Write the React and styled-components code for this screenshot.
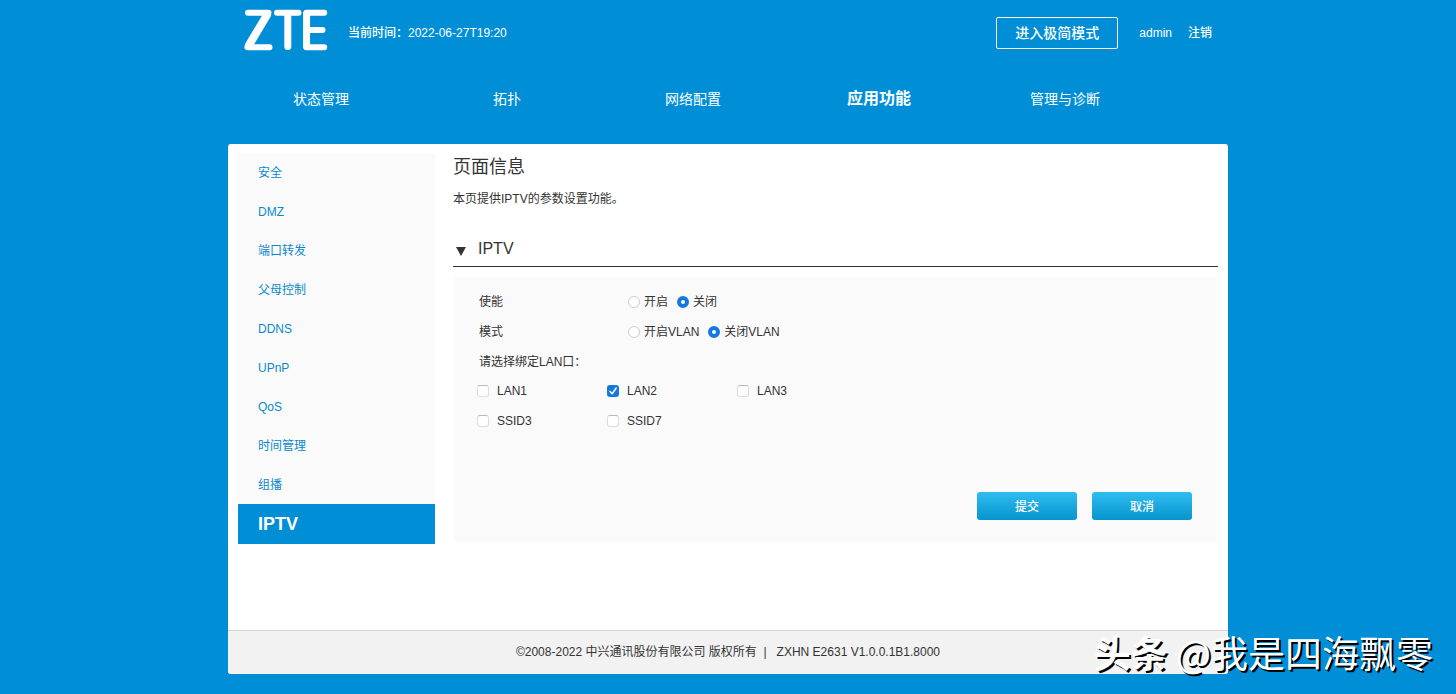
import { useState } from "react";
import styled, { createGlobalStyle, css } from "styled-components";

const GlobalStyle = createGlobalStyle`
  * {
    box-sizing: border-box;
  }

  body {
    margin: 0;
    background-color: #008fd7;
    color: #333;
    font-family: "Liberation Sans", "Noto Sans CJK SC", sans-serif;
    font-size: 12px;
    line-height: 18px;
  }

  a {
    color: inherit;
    text-decoration: none;
  }
`;

const Page = styled.div`
  position: relative;
  display: flex;
  flex-direction: column;
  min-height: 100vh;
  padding-bottom: 20px;
`;

const Container = styled.div`
  width: 100%;
  max-width: 1000px;
  margin: 0 auto;
`;

const TopBar = styled.header`
  display: flex;
  align-items: center;
  height: 66px;
  padding: 0 16px;
  color: white;
  font-weight: 500;
`;

const Logo = styled.svg`
  width: 84px;
  height: 42px;
  margin-bottom: 6px;
  fill: none;
  stroke: white;
  stroke-linecap: round;
  stroke-linejoin: round;
`;

const CurrentTime = styled.span`
  margin-left: 20px;
`;

const Account = styled.div`
  display: flex;
  align-items: center;
  gap: 16px;
  margin-left: auto;
`;

const ModeButton = styled.button`
  width: 122px;
  height: 32px;
  margin-right: 5px;
  padding: 0;
  border: 1px solid white;
  border-radius: 2px;
  background: transparent;
  color: white;
  font: inherit;
  font-size: 14px;
  cursor: pointer;
`;

const Nav = styled.nav`
  display: flex;
  align-items: center;
  height: 66px;
  margin-bottom: 12px;
  padding-right: 70px;
`;

const NavLink = styled.a`
  flex: 1;
  color: white;
  font-size: ${(props) => (props.$active ? "16px" : "14px")};
  font-weight: ${(props) => (props.$active ? "bold" : "normal")};
  text-align: center;
`;

const Card = styled(Container)`
  display: flex;
  flex: 1;
  flex-direction: column;
  overflow: hidden;
  border-radius: 3px;
  background-color: white;
`;

const Body = styled.div`
  display: flex;
  flex: 1;
  gap: 18px;
  padding: 9px 10px 30px;
`;

const Sidebar = styled.nav`
  flex: 0 0 197px;
  align-self: flex-start;
  background-color: #fafafa;
`;

const SideLink = styled.a`
  display: block;
  padding: 2px 0 0 20px;
  color: #0a8acb;
  line-height: 37px;

  ${(props) =>
    props.$active &&
    css`
      padding-top: 0;
      background-color: #008fd7;
      color: white;
      font-size: 18px;
      font-weight: bold;
      line-height: 40px;
    `}
`;

const Content = styled.main`
  flex: 1;
  min-width: 0;
  padding-top: 1px;
`;

const Title = styled.h1`
  margin: 0;
  font-size: 18px;
  font-weight: normal;
  line-height: 27px;
`;

const Description = styled.p`
  margin: 9px 0 26px;
`;

const SectionTitle = styled.h2`
  display: flex;
  align-items: center;
  gap: 12px;
  margin: 0 0 10px;
  padding: 0 3px 2px;
  border-bottom: 1px solid #333;
  font-size: 16px;
  font-weight: normal;
  line-height: 30px;
`;

const Triangle = styled.span`
  margin-top: 4px;
  border-top: 9px solid #333;
  border-right: 5px solid transparent;
  border-left: 5px solid transparent;
`;

const Form = styled.form`
  margin: 0 1px;
  padding: 10px 25px 22px;
  background-color: #fafafa;
`;

const Row = styled.div`
  display: flex;
  align-items: center;
  height: 30px;
`;

const RowLabel = styled.span`
  width: 149px;
`;

const Choice = styled.label`
  display: flex;
  align-items: center;
  gap: 4px;
  margin-right: 9px;
`;

const Radio = styled.input.attrs({ type: "radio" })`
  appearance: none;
  width: 12px;
  height: 12px;
  margin: 0;
  border: 1px solid #ccc;
  border-radius: 50%;
  background-color: white;

  &:checked {
    border: 4px solid #1478e0;
  }
`;

const Ports = styled.div`
  display: grid;
  grid-template-columns: repeat(3, 130px);
  margin-bottom: 55px;
  margin-left: -2px;
`;

const Port = styled.label`
  display: flex;
  align-items: center;
  gap: 8px;
  height: 30px;
  padding-bottom: 2px;
`;

const Checkbox = styled.input.attrs({ type: "checkbox" })`
  appearance: none;
  width: 12px;
  height: 12px;
  margin: 0;
  border: 1px solid #ddd;
  border-top-color: #bbb;
  border-radius: 3px;
  background-color: white;

  &:checked {
    border: 0;
    background: #1478e0
      url("data:image/svg+xml,%3Csvg xmlns='http://www.w3.org/2000/svg' viewBox='0 0 12 12'%3E%3Cpath d='M3 6.4L5.2 8.8L9.2 3' fill='none' stroke='white' stroke-width='1.5' stroke-linecap='round' stroke-linejoin='round'/%3E%3C/svg%3E");
  }
`;

const Buttons = styled.div`
  display: flex;
  justify-content: flex-end;
  gap: 15px;
`;

const Button = styled.button`
  width: 100px;
  height: 28px;
  padding: 2px 0 0;
  border: 0;
  border-radius: 3px;
  background: linear-gradient(#2fbdf1, #0594cd);
  color: white;
  font: inherit;
  font-weight: 500;
  cursor: pointer;
`;

const Footer = styled.footer`
  display: flex;
  justify-content: center;
  padding: 12px 0 13px;
  border-top: 1px solid #d6d6d6;
  background-color: #f2f2f2;
  white-space: pre;
`;

const Watermark = styled.div`
  position: absolute;
  right: 23px;
  bottom: 15px;
  color: white;
  font-family: "Noto Sans CJK SC", sans-serif;
  font-size: 37px;
  line-height: 54px;
  text-shadow: 2px 2px 0 black;
  pointer-events: none;
`;

const Strong = styled.span`
  font-weight: bold;
`;

const navItems = ["状态管理", "拓扑", "网络配置", "应用功能", "管理与诊断"];

const sideItems = [
  "安全",
  "DMZ",
  "端口转发",
  "父母控制",
  "DDNS",
  "UPnP",
  "QoS",
  "时间管理",
  "组播",
  "IPTV",
];

const portItems = ["LAN1", "LAN2", "LAN3", "SSID3", "SSID7"];

function RadioRow({ label, name, options, value, onChange }) {
  return (
    <Row role="radiogroup" aria-label={label}>
      <RowLabel>{label}</RowLabel>
      {options.map((option) => (
        <Choice key={option}>
          <Radio
            name={name}
            checked={value === option}
            onChange={() => onChange(option)}
          />
          {option}
        </Choice>
      ))}
    </Row>
  );
}

export default function App() {
  const [enabled, setEnabled] = useState("关闭");
  const [mode, setMode] = useState("关闭VLAN");
  const [ports, setPorts] = useState(["LAN2"]);

  const togglePort = (port) => {
    setPorts((prev) =>
      prev.includes(port) ? prev.filter((p) => p !== port) : [...prev, port]
    );
  };

  return (
    <Page>
      <GlobalStyle />
      <Container>
        <TopBar>
          <Logo viewBox="0 0 84 42" aria-hidden="true">
            <path strokeWidth="6" d="M4 3.8H24.5L3.4 38.2H25.5" />
            <path strokeWidth="8" d="M23 6L5 36" />
            <path strokeWidth="6" d="M33 3.8H54.5M62.5 3.8H80.2M62.5 21H78.5M62.5 38.2H80.2" />
            <path strokeWidth="7" d="M43.8 4.4V37.6M62.6 4.4V37.6" />
          </Logo>
          <CurrentTime>当前时间：2022-06-27T19:20</CurrentTime>
          <Account>
            <ModeButton type="button">进入极简模式</ModeButton>
            <span>admin</span>
            <a href="#logout">注销</a>
          </Account>
        </TopBar>
        <Nav>
          {navItems.map((item) => (
            <NavLink key={item} href="#nav" $active={item === "应用功能"}>
              {item}
            </NavLink>
          ))}
        </Nav>
      </Container>
      <Card>
        <Body>
          <Sidebar>
            {sideItems.map((item) => (
              <SideLink key={item} href="#side" $active={item === "IPTV"}>
                {item}
              </SideLink>
            ))}
          </Sidebar>
          <Content>
            <Title>页面信息</Title>
            <Description>本页提供IPTV的参数设置功能。</Description>
            <SectionTitle>
              <Triangle />
              IPTV
            </SectionTitle>
            <Form onSubmit={(e) => e.preventDefault()}>
              <RadioRow
                label="使能"
                name="enabled"
                options={["开启", "关闭"]}
                value={enabled}
                onChange={setEnabled}
              />
              <RadioRow
                label="模式"
                name="mode"
                options={["开启VLAN", "关闭VLAN"]}
                value={mode}
                onChange={setMode}
              />
              <Row>请选择绑定LAN口：</Row>
              <Ports>
                {portItems.map((port) => (
                  <Port key={port}>
                    <Checkbox
                      checked={ports.includes(port)}
                      onChange={() => togglePort(port)}
                    />
                    {port}
                  </Port>
                ))}
              </Ports>
              <Buttons>
                <Button type="submit">提交</Button>
                <Button type="button">取消</Button>
              </Buttons>
            </Form>
          </Content>
        </Body>
        <Footer>©2008-2022 中兴通讯股份有限公司 版权所有  |   ZXHN E2631 V1.0.0.1B1.8000</Footer>
      </Card>
      <Watermark>
        <Strong>头条</Strong> @我是四海飘零
      </Watermark>
    </Page>
  );
}
